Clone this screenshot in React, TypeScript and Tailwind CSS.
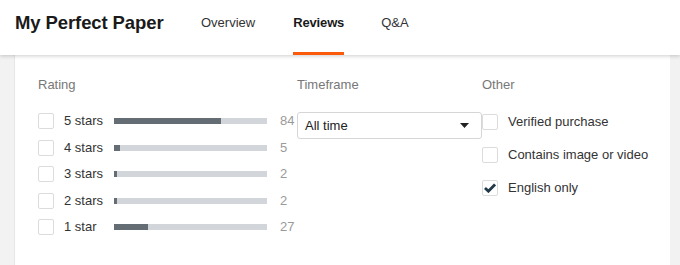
import React from "react";

const ratings = [
  { label: "5 stars", count: 84 },
  { label: "4 stars", count: 5 },
  { label: "3 stars", count: 2 },
  { label: "2 stars", count: 2 },
  { label: "1 star", count: 27 },
];

const total = 120;

const other = [
  { label: "Verified purchase", checked: false },
  { label: "Contains image or video", checked: false },
  { label: "English only", checked: true },
];

function Box({ checked = false }: { checked?: boolean }) {
  return (
    <span className="flex h-4 w-4 shrink-0 items-center justify-center rounded-[2px] border border-[#dcdcdc] bg-white">
      {checked && (
        <svg width="12" height="10" viewBox="0 0 12 10">
          <path d="M1 5 L4.4 8.2 L11 1.4" fill="none" stroke="#22394a" strokeWidth="2.8" />
        </svg>
      )}
    </span>
  );
}

export default function App() {
  return (
    <div className="h-[265px] w-[680px] overflow-hidden bg-[#f2f2f2] font-['Liberation_Sans',Arial,sans-serif] text-[#222]">
      {/* Top bar */}
      <header className="relative z-10 flex h-[55px] bg-white pl-[15px] shadow-[0_1px_4px_rgba(0,0,0,0.2)]">
        <h1 className="flex w-[186px] items-center pb-[9px] text-[18.5px] font-bold leading-none tracking-[-0.1px] text-[#1a1a1a]">
          My Perfect Paper
        </h1>
        <nav className="flex h-full text-[13px]">
          <a className="flex h-full items-center pb-[9px] pr-[38px] text-[#333]">Overview</a>
          <a className="relative flex h-full items-center pb-[9px] font-bold tracking-[-0.15px] text-[#1a1a1a]">
            Reviews
            <span className="absolute inset-x-0 bottom-0 h-[3px] bg-[#fb5a0b]" />
          </a>
          <a className="flex h-full items-center pb-[9px] pl-[37px] text-[#333]">Q&amp;A</a>
        </nav>
      </header>

      {/* Filter card */}
      <div className="ml-[14px] mr-[10px] h-[230px] border-l border-[#e6e6e6] bg-white pl-[23px] pt-[21px] text-[13px]">
        <div className="flex">
          {/* Rating */}
          <section className="w-[259px]">
            <h2 className="h-[18px] leading-[18px] text-[#777]">Rating</h2>
            <ul className="mt-[19px]">
              {ratings.map((r) => (
                <li key={r.label} className="flex h-[26.5px] items-start">
                  <Box />
                  <span className="ml-[10px] w-[50px] leading-4 text-[#333]">{r.label}</span>
                  <span className="mt-[5px] h-[6px] w-[153px] bg-[#d2d6da]">
                    <span
                      className="block h-full bg-[#656d74]"
                      style={{ width: `${(r.count / total) * 100}%` }}
                    />
                  </span>
                  <span className="ml-[13px] leading-4 text-[#9a9a9a]">{r.count}</span>
                </li>
              ))}
            </ul>
          </section>

          {/* Timeframe */}
          <section className="w-[185px]">
            <h2 className="h-[18px] leading-[18px] text-[#777]">Timeframe</h2>
            <div className="mt-[18px] flex h-[27px] w-[185px] items-center justify-between rounded-[3px] border border-[#d6d6d6] pl-[7px] pr-[12px] text-[13px] text-[#222]">
              <span>All time</span>
              <svg width="9" height="5" viewBox="0 0 9 5">
                <path d="M0 0 H9 L4.5 5 Z" fill="#222" />
              </svg>
            </div>
          </section>

          {/* Other */}
          <section>
            <h2 className="h-[18px] leading-[18px] text-[#777]">Other</h2>
            <ul className="mt-[20px]">
              {other.map((o) => (
                <li key={o.label} className="flex h-[33px] items-start">
                  <Box checked={o.checked} />
                  <span className="ml-[10px] leading-4 text-[#333]">{o.label}</span>
                </li>
              ))}
            </ul>
          </section>
        </div>
      </div>
    </div>
  );
}
